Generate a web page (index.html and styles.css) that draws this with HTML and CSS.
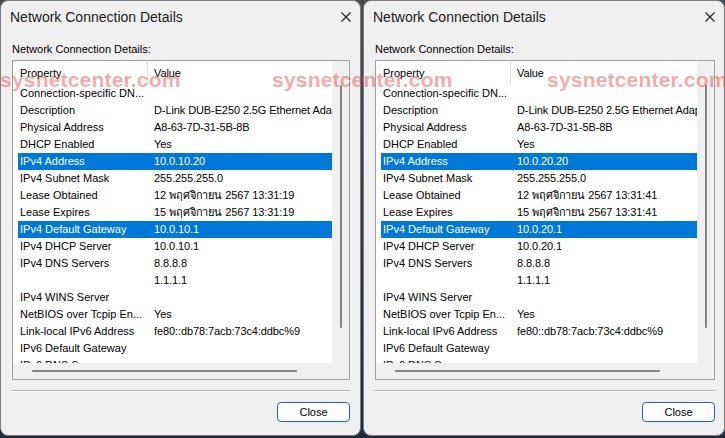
FILE: index.html
```html
<!DOCTYPE html>
<html lang="en">
<head>
  <meta charset="UTF-8" />
  <meta name="viewport" content="width=device-width, initial-scale=1.0"/>
  <title>Network Connection Details</title>
  <link rel="stylesheet" href="styles.css">
</head>
<body>

  <div class="desktop">

    <!-- first adapter -->
    <div class="dialog">
      <div class="titlebar">
        <span class="title">Network Connection Details</span>
        <svg class="close-x" width="10" height="10" viewBox="0 0 10 10">
          <path d="M0.5 0.5 L9.5 9.5 M9.5 0.5 L0.5 9.5" stroke="#1b1b1b" stroke-width="1.1" fill="none"/>
        </svg>
      </div>
      <div class="body">
        <div class="label">Network Connection Details:</div>
        <div class="listbox">
          <div class="list-content">
            <div class="header">
              <span class="prop">Property</span>
              <span class="val">Value</span>
            </div>
            <div class="row"><span class="prop">Connection-specific DN...</span><span class="val"></span></div>
            <div class="row"><span class="prop">Description</span><span class="val">D-Link DUB-E250 2.5G Ethernet Adapter</span></div>
            <div class="row"><span class="prop">Physical Address</span><span class="val">A8-63-7D-31-5B-8B</span></div>
            <div class="row"><span class="prop">DHCP Enabled</span><span class="val">Yes</span></div>
            <div class="row sel"><span class="prop">IPv4 Address</span><span class="val">10.0.10.20</span></div>
            <div class="row"><span class="prop">IPv4 Subnet Mask</span><span class="val">255.255.255.0</span></div>
            <div class="row"><span class="prop">Lease Obtained</span><span class="val">12 พฤศจิกายน 2567 13:31:19</span></div>
            <div class="row"><span class="prop">Lease Expires</span><span class="val">15 พฤศจิกายน 2567 13:31:19</span></div>
            <div class="row sel"><span class="prop">IPv4 Default Gateway</span><span class="val">10.0.10.1</span></div>
            <div class="row"><span class="prop">IPv4 DHCP Server</span><span class="val">10.0.10.1</span></div>
            <div class="row"><span class="prop">IPv4 DNS Servers</span><span class="val">8.8.8.8</span></div>
            <div class="row"><span class="prop"></span><span class="val">1.1.1.1</span></div>
            <div class="row"><span class="prop">IPv4 WINS Server</span><span class="val"></span></div>
            <div class="row"><span class="prop">NetBIOS over Tcpip En...</span><span class="val">Yes</span></div>
            <div class="row"><span class="prop">Link-local IPv6 Address</span><span class="val">fe80::db78:7acb:73c4:ddbc%9</span></div>
            <div class="row"><span class="prop">IPv6 Default Gateway</span><span class="val"></span></div>
            <div class="row"><span class="prop">IPv6 DNS Server</span><span class="val"></span></div>
          </div>
          <div class="vscroll"><div class="vthumb"></div></div>
          <div class="hscroll"><div class="hthumb"></div></div>
          <div class="corner"></div>
        </div>
        <div class="separator"></div>
        <div class="footer">
          <button class="close-btn">Close</button>
        </div>
      </div>
    </div>

    <!-- second adapter -->
    <div class="dialog wide">
      <div class="titlebar">
        <span class="title">Network Connection Details</span>
        <svg class="close-x" width="10" height="10" viewBox="0 0 10 10">
          <path d="M0.5 0.5 L9.5 9.5 M9.5 0.5 L0.5 9.5" stroke="#1b1b1b" stroke-width="1.1" fill="none"/>
        </svg>
      </div>
      <div class="body">
        <div class="label">Network Connection Details:</div>
        <div class="listbox">
          <div class="list-content">
            <div class="header">
              <span class="prop">Property</span>
              <span class="val">Value</span>
            </div>
            <div class="row"><span class="prop">Connection-specific DN...</span><span class="val"></span></div>
            <div class="row"><span class="prop">Description</span><span class="val">D-Link DUB-E250 2.5G Ethernet Adapter</span></div>
            <div class="row"><span class="prop">Physical Address</span><span class="val">A8-63-7D-31-5B-8B</span></div>
            <div class="row"><span class="prop">DHCP Enabled</span><span class="val">Yes</span></div>
            <div class="row sel"><span class="prop">IPv4 Address</span><span class="val">10.0.20.20</span></div>
            <div class="row"><span class="prop">IPv4 Subnet Mask</span><span class="val">255.255.255.0</span></div>
            <div class="row"><span class="prop">Lease Obtained</span><span class="val">12 พฤศจิกายน 2567 13:31:41</span></div>
            <div class="row"><span class="prop">Lease Expires</span><span class="val">15 พฤศจิกายน 2567 13:31:41</span></div>
            <div class="row sel"><span class="prop">IPv4 Default Gateway</span><span class="val">10.0.20.1</span></div>
            <div class="row"><span class="prop">IPv4 DHCP Server</span><span class="val">10.0.20.1</span></div>
            <div class="row"><span class="prop">IPv4 DNS Servers</span><span class="val">8.8.8.8</span></div>
            <div class="row"><span class="prop"></span><span class="val">1.1.1.1</span></div>
            <div class="row"><span class="prop">IPv4 WINS Server</span><span class="val"></span></div>
            <div class="row"><span class="prop">NetBIOS over Tcpip En...</span><span class="val">Yes</span></div>
            <div class="row"><span class="prop">Link-local IPv6 Address</span><span class="val">fe80::db78:7acb:73c4:ddbc%9</span></div>
            <div class="row"><span class="prop">IPv6 Default Gateway</span><span class="val"></span></div>
            <div class="row"><span class="prop">IPv6 DNS Server</span><span class="val"></span></div>
          </div>
          <div class="vscroll"><div class="vthumb"></div></div>
          <div class="hscroll"><div class="hthumb"></div></div>
          <div class="corner"></div>
        </div>
        <div class="separator"></div>
        <div class="footer">
          <button class="close-btn">Close</button>
        </div>
      </div>
    </div>

    <!-- watermark laid over the screenshot -->
    <div class="watermark wm-1">sysnetcenter.com</div>
    <div class="watermark wm-2">sysnetcenter.com</div>
    <div class="watermark wm-3">sysnetcenter.com</div>

  </div>

</body>
</html>
```

FILE: styles.css
```css
* {
  box-sizing: border-box;
  margin: 0;
  padding: 0;
}

body {
  background: linear-gradient(to bottom, #4a4d52, #1b2c42);
  font-family: 'Liberation Sans', Arial, sans-serif;
  font-size: 11px;
  color: #000;
  width: 725px;
  height: 438px;
  overflow: hidden;
}

.desktop {
  position: relative;
  display: flex;
  gap: 2px;
  height: 438px;
}

.dialog {
  width: 361px;
  height: 436px;
  background: #f0f0f0;
  border: 1px solid #7d7d7d;
  border-radius: 8px;
  display: flex;
  flex-direction: column;
  overflow: hidden;
}

.dialog.wide {
  width: 362px;
}

.titlebar {
  height: 31px;
  display: flex;
  align-items: center;
  justify-content: space-between;
  padding: 0 9px 0 9px;
}

.title {
  font-size: 14px;
  color: #1b1b1b;
}

.close-x {
  display: block;
}

.body {
  padding: 9px 10px 0 11px;
  display: flex;
  flex-direction: column;
}

.dialog.wide .body {
  padding-right: 9px;
}

.label {
  height: 16px;
  line-height: 16px;
  margin-bottom: 3px;
}

/* list view with its scroll bars */
.listbox {
  height: 320px;
  background: #fff;
  border: 1px solid #a2a2a2;
  display: grid;
  grid-template-columns: 1fr 17px;
  grid-template-rows: 1fr 16px;
}

.list-content {
  overflow: hidden;
  padding-left: 5px;
}

.header {
  height: 24px;
  display: flex;
  align-items: stretch;
  white-space: nowrap;
}

.header .prop {
  border-right: 1px solid #dedede;
  line-height: 24px;
}

.header .val {
  line-height: 24px;
}

.row {
  height: 17px;
  line-height: 17px;
  display: flex;
  white-space: nowrap;
}

.prop {
  flex: none;
  width: 130px;
  padding-left: 2px;
}

.val {
  padding-left: 6px;
  letter-spacing: -0.1px;
}

.row.sel {
  background: #0078d7;
  color: #fff;
}

.vscroll {
  background: #f0f0f0;
  display: flex;
  justify-content: center;
}

.vthumb {
  width: 2px;
  height: 243px;
  margin-top: 24px;
  background: #858585;
  border-radius: 1px;
}

.hscroll {
  background: #f0f0f0;
  display: flex;
  align-items: center;
}

.hthumb {
  height: 2px;
  width: 265px;
  margin-left: 19px;
  background: #858585;
  border-radius: 1px;
}

.corner {
  background: #f0f0f0;
}

.separator {
  margin-top: 10px;
  border-top: 1px solid #b4b4b4;
  border-bottom: 1px solid #fbfbfb;
}

.footer {
  display: flex;
  justify-content: flex-end;
  margin-top: 10px;
}

.close-btn {
  width: 73px;
  height: 20px;
  background: #fdfdfd;
  border: 1px solid #2d6597;
  border-radius: 4px;
  font-family: 'Liberation Sans', Arial, sans-serif;
  font-size: 11px;
  color: #000;
}

.watermark {
  position: absolute;
  top: 69px;
  font-size: 21px;
  line-height: 21px;
  font-weight: bold;
  letter-spacing: 0.2px;
  color: rgba(232, 48, 58, 0.42);
  white-space: nowrap;
  pointer-events: none;
}

.wm-1 { left: 0; }
.wm-2 { left: 272px; }
.wm-3 { left: 547px; }
```
